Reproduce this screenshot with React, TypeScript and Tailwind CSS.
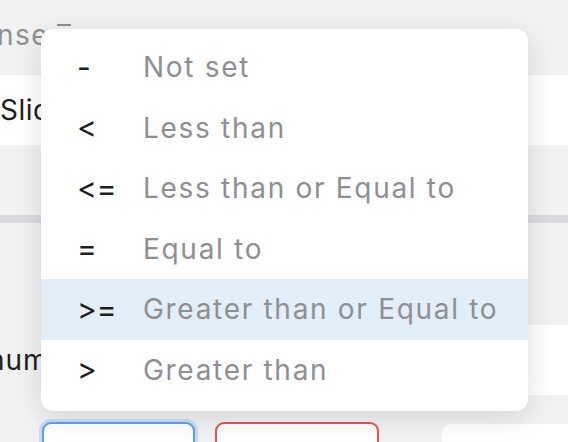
const options = [
  { sym: "-", label: "Not set" },
  { sym: "<", label: "Less than" },
  { sym: "<=", label: "Less than or Equal to" },
  { sym: "=", label: "Equal to" },
  { sym: ">=", label: "Greater than or Equal to" },
  { sym: ">", label: "Greater than" },
];

export default function App() {
  return (
    <div className="relative w-[568px] h-[442px] overflow-hidden bg-[#f2f2f2] font-['Inter',sans-serif]">
      {/* form behind the menu */}
      <div className="flex flex-col">
        <div className="h-[75px] flex items-start pt-[18px]">
          <span className="text-[28px] leading-[34px] text-[#8e8e93] tracking-[1.5px] -ml-[3px]">nse</span>
          <span className="ml-[8px] mt-[6px] w-[14px] h-[2px] bg-[#8e8e93]" />
        </div>
        <div className="h-[70px] bg-white flex items-center">
          <span className="text-[28px] text-[#1d1d1f] tracking-[0.5px]">Slider</span>
        </div>
        <div className="h-[70px]" />
        <div className="h-[8px] bg-[#dcdce0]" />
        <div className="h-[102px]" />
        <div className="h-[70px] flex items-center">
          <span className="text-[28px] text-[#1d1d1f] tracking-[1px] -ml-[12px]">num</span>
          <div className="ml-auto w-[82px] h-full bg-white" />
        </div>
        <div className="flex items-start mt-[27px] pl-[42px]">
          <div className="w-[153px] h-[40px] bg-white border-2 border-[#5d9ff0] rounded-[9px] ring-[3px] ring-[#c9dcf3]" />
          <div className="ml-[20px] w-[164px] h-[40px] bg-white border-2 border-[#e5554d] rounded-[9px]" />
          <div className="ml-[63px] mt-[2px] flex-1 h-[40px] bg-white rounded-tl-[9px]" />
        </div>
      </div>

      {/* comparison menu */}
      <div className="absolute left-[41px] top-[29px] w-[487px] h-[382px] bg-white rounded-[12px] shadow-[0_6px_28px_rgba(0,0,0,0.13)] pt-[8px] pb-[11px]">
        {options.map((o, i) => (
          <div
            key={o.label}
            className={`flex items-center h-[60.5px] ${i === 4 ? "bg-[#e2eff9]" : ""}`}
          >
            <span className="w-[102px] pl-[36px] text-[30px] text-[#1d1d1f]">{o.sym}</span>
            <span className="text-[28px] tracking-[1.7px] text-[#8e8e93]">{o.label}</span>
          </div>
        ))}
      </div>
    </div>
  );
}
